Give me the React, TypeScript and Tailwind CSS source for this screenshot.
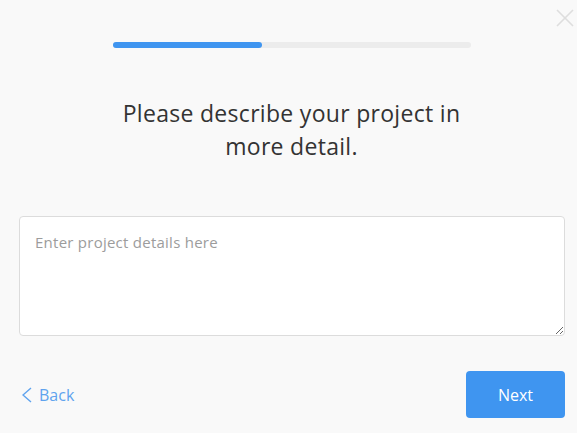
import React from 'react';

const App: React.FC = () => {
  return (
    <div className="relative w-[577px] h-[433px] bg-[#f9f9f9] font-['Open_Sans',sans-serif] overflow-hidden">
      {/* Close button */}
      <button className="absolute top-[9px] left-[556px] text-[#dedede]">
        <svg width="18" height="18" viewBox="0 0 18 18" fill="none" stroke="currentColor" strokeWidth="1.6">
          <line x1="1" y1="1" x2="17" y2="17" />
          <line x1="17" y1="1" x2="1" y2="17" />
        </svg>
      </button>

      <div className="flex flex-col pt-[42px]">
        {/* Progress */}
        <div className="ml-[113px] w-[358px] h-[6px] rounded-full bg-[#ececec]">
          <div className="h-full w-[149px] rounded-full bg-[#3f95f0]" />
        </div>

        {/* Heading */}
        <h1 className="mt-[49px] pl-[6px] text-center text-[23px] leading-[33px] tracking-[0.3px] text-[#333333]">
          Please describe your project in
          <br />
          more detail.
        </h1>

        {/* Details */}
        <div className="mt-[53px] pl-[19px] pr-[12px]">
          <textarea
            placeholder="Enter project details here"
            className="block w-full h-[120px] rounded-[4px] border border-[#dcdcdc] bg-white px-[15px] py-[14px] text-[15px] leading-[22px] tracking-[0.25px] text-[#333] placeholder:text-[#9c9c9c] outline-none"
          />
        </div>

        {/* Footer */}
        <div className="mt-[35px] flex items-center justify-between pl-[22px] pr-[12px]">
          <button className="flex items-center gap-[7px] text-[16px] text-[#5fa3ee]">
            <svg width="10" height="16" viewBox="0 0 10 16" fill="none" stroke="currentColor" strokeWidth="1.4">
              <polyline points="9,1 1,8 9,15" />
            </svg>
            Back
          </button>
          <button className="w-[99px] h-[47px] rounded-[4px] bg-[#3f95f0] text-[16px] text-white">
            Next
          </button>
        </div>
      </div>
    </div>
  );
};

export default App;
